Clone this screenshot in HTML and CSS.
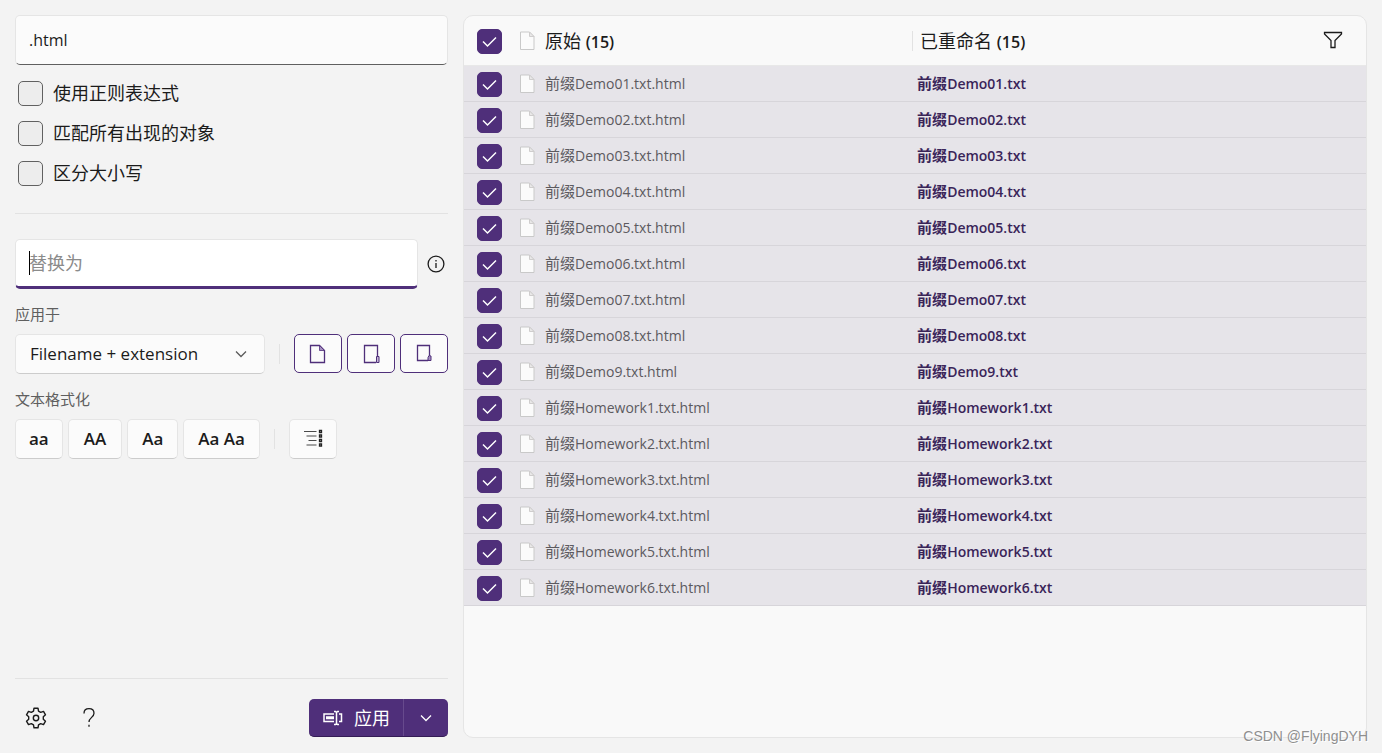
FILE: index.html
```html
<!DOCTYPE html>
<html lang="zh-CN">
<head>
<meta charset="utf-8">
<meta name="viewport" content="width=device-width, initial-scale=1">
<title>PowerRename</title>
<link rel="stylesheet" href="styles.css">
</head>
<body>
<svg class="sprite" aria-hidden="true">
  <symbol id="page" viewBox="0 0 15 20">
    <path d="M.500 1h9l4.500 4.500V18.500H.500z" fill="#fbfbfb" stroke="#c9c9c9"/>
    <path d="M9.500 1v4.500H14z" fill="#e9e8e8" stroke="#cfcdcd"/>
  </symbol>
  <symbol id="chevron" viewBox="0 0 12 8">
    <path d="M1 1.500l5 5 5-5" fill="none" stroke="currentColor" stroke-width="1.300"/>
  </symbol>
</svg>
<main class="app">
  <form class="sidebar">
    <input class="field" type="text" value=".html" aria-label="搜索">
    <div class="options">
      <label class="option"><input class="check" type="checkbox"><span>使用正则表达式</span></label>
      <label class="option"><input class="check" type="checkbox"><span>匹配所有出现的对象</span></label>
      <label class="option"><input class="check" type="checkbox"><span>区分大小写</span></label>
    </div>
    <hr class="rule">
    <div class="replace">
      <div class="replace-box">
        <input class="field field-active" type="text" placeholder="替换为" aria-label="替换为">
        <span class="caret"></span>
      </div>
      <button class="plain info" type="button" aria-label="信息">
        <svg width="18" height="18" viewBox="0 0 18 18" fill="none" stroke="currentColor"><circle cx="9" cy="9" r="7.900" stroke-width="1.300"/><path d="M9 8v5M9 5v1.500" stroke-width="1.300"/></svg>
      </button>
    </div>
    <label class="caption" for="scope">应用于</label>
    <div class="bar">
      <div class="select-box">
        <select class="select" id="scope"><option>Filename + extension</option></select>
        <svg class="select-arrow" width="12" height="8"><use href="#chevron"/></svg>
      </div>
      <span class="tick"></span>
      <div class="toggles">
        <button class="toggle" type="button" aria-label="包含文件">
          <svg width="20" height="22" viewBox="0 0 20 22" fill="none" stroke="currentColor"><path d="M2.500 2.500h9l5 5v12h-14z" stroke-width="1.300"/><path d="M11.500 2.500v5h5z" fill="#a58fc0" stroke-width=".800"/></svg>
        </button>
        <button class="toggle" type="button" aria-label="包含文件夹">
          <svg width="20" height="22" viewBox="0 0 20 22" fill="none" stroke="currentColor"><path d="M16.500 13.500v-11h-13v17h11.500" stroke-width="1.300"/><path d="M15.500 13.500h2.500v6h-2.500z" fill="#c5b7d6"/></svg>
        </button>
        <button class="toggle" type="button" aria-label="包含子文件夹">
          <svg width="20" height="22" viewBox="0 0 20 22" fill="none" stroke="currentColor"><path d="M15.500 12.500v-10h-12v15h10.500" stroke-width="1.300"/><path d="M15 12.500l2 .500v4.500h-3v-3z" fill="#a58fc0"/></svg>
        </button>
      </div>
    </div>
    <span class="caption">文本格式化</span>
    <div class="formats">
      <button class="format format-lower" type="button">aa</button>
      <button class="format format-upper" type="button">AA</button>
      <button class="format" type="button">Aa</button>
      <button class="format" type="button">Aa Aa</button>
      <span class="tick"></span>
      <button class="format format-icon" type="button" aria-label="枚举项">
        <svg width="20" height="20" viewBox="0 0 20 20" fill="none"><path d="M1 2.500h12.500M3.500 7h10M5.500 11.500h8M3.500 16h10" stroke="#4a4a4a" stroke-width="1.200"/><path d="M16.500 1.500h2v2h-2zM16.500 6h2v2h-2zM16.500 10.500h2v2h-2zM16.500 15h2v2h-2z" stroke="#222" stroke-width="1.300"/></svg>
      </button>
    </div>
    <footer class="footer">
      <button class="plain" type="button" aria-label="设置">
        <svg width="22" height="22" viewBox="0 0 22 22" fill="none" stroke="currentColor" stroke-width="1.400" stroke-linejoin="round"><path d="M9 1.200h4l.500 2.900 2.200 1.300 2.800-1 2 3.400-2.200 2v2.400l2.200 2-2 3.400-2.800-1-2.200 1.300-.500 2.900H9l-.500-2.900-2.200-1.300-2.800 1-2-3.400 2.200-2V9.800l-2.200-2 2-3.400 2.800 1 2.200-1.300z"/><circle cx="11" cy="11" r="2.700"/></svg>
      </button>
      <button class="plain" type="button" aria-label="帮助">
        <svg width="14" height="22" viewBox="0 0 14 22" fill="none" stroke="currentColor" stroke-width="1.300"><path d="M2 6.500C2 3.500 4 1.700 7 1.700s5 1.800 5 4.600c0 4-5 4.200-5 8.700"/><path d="M7 17.800v2"/></svg>
      </button>
      <div class="split">
        <button class="apply" type="button">
          <svg width="20" height="16" viewBox="0 0 20 16" fill="none" stroke="currentColor" stroke-width="1.500"><path d="M11 4H1v7.500h10M16 4h2.500v7.500H16M3 7h8M3 8.500h8"/><path d="M11 1.500h1.500l1 1 1-1H16M13.500 2.500v11M11 14.500h1.500l1-1 1 1H16"/></svg>
          <span>应用</span>
        </button>
        <button class="more" type="button" aria-label="更多"><svg width="12" height="8"><use href="#chevron"/></svg></button>
      </div>
    </footer>
  </form>
  <section class="panel">
    <table class="files">
      <colgroup><col class="col-check"><col class="col-icon"><col class="col-name"><col></colgroup>
      <thead>
        <tr>
          <th><input class="check" type="checkbox" checked aria-label="全选"></th>
          <th><svg width="15" height="20"><use href="#page"/></svg></th>
          <th>原始 <b>(15)</b></th>
          <th><div class="renamed-head"><span class="tick"></span><span>已重命名 <b>(15)</b></span>
            <button class="plain filter" type="button" aria-label="筛选"><svg width="20" height="20" viewBox="0 0 20 20" fill="none" stroke="currentColor" stroke-width="1.300"><path d="M1.500 1.500h17v1.500l-6.500 6.500v7H8v-7L1.500 3z"/></svg></button></div></th>
        </tr>
      </thead>
      <tbody>
        <tr><td><input class="check" type="checkbox" checked aria-label="Demo01"></td><td><svg width="15" height="20"><use href="#page"/></svg></td><td><span class="prefix">前缀</span>Demo01.txt.html</td><td><span class="prefix">前缀</span>Demo01.txt</td></tr>
        <tr><td><input class="check" type="checkbox" checked aria-label="Demo02"></td><td><svg width="15" height="20"><use href="#page"/></svg></td><td><span class="prefix">前缀</span>Demo02.txt.html</td><td><span class="prefix">前缀</span>Demo02.txt</td></tr>
        <tr><td><input class="check" type="checkbox" checked aria-label="Demo03"></td><td><svg width="15" height="20"><use href="#page"/></svg></td><td><span class="prefix">前缀</span>Demo03.txt.html</td><td><span class="prefix">前缀</span>Demo03.txt</td></tr>
        <tr><td><input class="check" type="checkbox" checked aria-label="Demo04"></td><td><svg width="15" height="20"><use href="#page"/></svg></td><td><span class="prefix">前缀</span>Demo04.txt.html</td><td><span class="prefix">前缀</span>Demo04.txt</td></tr>
        <tr><td><input class="check" type="checkbox" checked aria-label="Demo05"></td><td><svg width="15" height="20"><use href="#page"/></svg></td><td><span class="prefix">前缀</span>Demo05.txt.html</td><td><span class="prefix">前缀</span>Demo05.txt</td></tr>
        <tr><td><input class="check" type="checkbox" checked aria-label="Demo06"></td><td><svg width="15" height="20"><use href="#page"/></svg></td><td><span class="prefix">前缀</span>Demo06.txt.html</td><td><span class="prefix">前缀</span>Demo06.txt</td></tr>
        <tr><td><input class="check" type="checkbox" checked aria-label="Demo07"></td><td><svg width="15" height="20"><use href="#page"/></svg></td><td><span class="prefix">前缀</span>Demo07.txt.html</td><td><span class="prefix">前缀</span>Demo07.txt</td></tr>
        <tr><td><input class="check" type="checkbox" checked aria-label="Demo08"></td><td><svg width="15" height="20"><use href="#page"/></svg></td><td><span class="prefix">前缀</span>Demo08.txt.html</td><td><span class="prefix">前缀</span>Demo08.txt</td></tr>
        <tr><td><input class="check" type="checkbox" checked aria-label="Demo9"></td><td><svg width="15" height="20"><use href="#page"/></svg></td><td><span class="prefix">前缀</span>Demo9.txt.html</td><td><span class="prefix">前缀</span>Demo9.txt</td></tr>
        <tr><td><input class="check" type="checkbox" checked aria-label="Homework1"></td><td><svg width="15" height="20"><use href="#page"/></svg></td><td><span class="prefix">前缀</span>Homework1.txt.html</td><td><span class="prefix">前缀</span>Homework1.txt</td></tr>
        <tr><td><input class="check" type="checkbox" checked aria-label="Homework2"></td><td><svg width="15" height="20"><use href="#page"/></svg></td><td><span class="prefix">前缀</span>Homework2.txt.html</td><td><span class="prefix">前缀</span>Homework2.txt</td></tr>
        <tr><td><input class="check" type="checkbox" checked aria-label="Homework3"></td><td><svg width="15" height="20"><use href="#page"/></svg></td><td><span class="prefix">前缀</span>Homework3.txt.html</td><td><span class="prefix">前缀</span>Homework3.txt</td></tr>
        <tr><td><input class="check" type="checkbox" checked aria-label="Homework4"></td><td><svg width="15" height="20"><use href="#page"/></svg></td><td><span class="prefix">前缀</span>Homework4.txt.html</td><td><span class="prefix">前缀</span>Homework4.txt</td></tr>
        <tr><td><input class="check" type="checkbox" checked aria-label="Homework5"></td><td><svg width="15" height="20"><use href="#page"/></svg></td><td><span class="prefix">前缀</span>Homework5.txt.html</td><td><span class="prefix">前缀</span>Homework5.txt</td></tr>
        <tr><td><input class="check" type="checkbox" checked aria-label="Homework6"></td><td><svg width="15" height="20"><use href="#page"/></svg></td><td><span class="prefix">前缀</span>Homework6.txt.html</td><td><span class="prefix">前缀</span>Homework6.txt</td></tr>
      </tbody>
    </table>
  </section>
</main>
<div class="watermark">CSDN @FlyingDYH</div>
</body>
</html>
```
FILE: styles.css
```css
*, *::before, *::after { box-sizing: border-box; }

body {
  margin: 0;
  background: #f3f3f3;
  color: #1b1b1b;
  font: 18px/24px "Open Sans", "Noto Sans CJK SC", sans-serif;
}

button, input, select { font: inherit; color: inherit; margin: 0; }
svg { display: block; }
.sprite { position: absolute; width: 0; height: 0; }

.app {
  display: flex;
  gap: 15px;
  min-height: 100vh;
  padding: 15px;
}

/* Left column */
.sidebar {
  display: flex;
  flex-direction: column;
  flex: 0 0 433px;
}

.field {
  display: block;
  width: 100%;
  height: 50px;
  padding: 0 13px;
  border: 1px solid #e5e5e5;
  border-bottom-color: #5f5f5f;
  border-radius: 5px;
  background: #fbfbfb;
  font-size: 16px;
  outline: 0;
}
.field-active {
  border-bottom: 3px solid #4f2f7a;
  background: #fff;
  font-size: 18px;
}
.field::placeholder { color: #8b8b8b; opacity: 1; }

.options { padding: 8px 0 20px; }
.option {
  display: flex;
  align-items: center;
  gap: 10px;
  height: 40px;
  padding-left: 3px;
}

.check {
  display: block;
  appearance: none;
  width: 25px;
  height: 25px;
  border: 1px solid #616161;
  border-radius: 5px;
  background: #ededed;
}
.check:checked {
  border-color: #4f2f7a;
  background: #4f2f7a url("data:image/svg+xml,%3Csvg xmlns='http://www.w3.org/2000/svg' viewBox='0 0 25 25'%3E%3Cpath d='M6 12.500l4.500 4.500 8.500-8.500' fill='none' stroke='white' stroke-width='1.500'/%3E%3C/svg%3E") center / 25px 25px;
}

.rule {
  width: 100%;
  height: 1px;
  margin: 0 0 25px;
  border: 0;
  background: #e2e2e2;
}

.replace { display: flex; align-items: center; gap: 9px; }
.replace-box { position: relative; flex: 1; }
.caret {
  position: absolute;
  left: 14px;
  top: 12px;
  width: 1px;
  height: 24px;
  background: #000;
}

.plain {
  display: grid;
  place-items: center;
  padding: 0;
  border: 0;
  background: none;
}
.info { width: 18px; margin-right: 3px; }

.caption {
  padding: 13px 0 8px;
  color: #5f5f5f;
  font-size: 15px;
}

.bar { display: flex; align-items: center; }
.select-box { position: relative; flex: 1; }
.select {
  display: block;
  appearance: none;
  width: 100%;
  height: 40px;
  padding: 0 40px 0 14px;
  border: 1px solid #e5e5e5;
  border-bottom-color: #cccccc;
  border-radius: 5px;
  background: #fbfbfb;
  font-size: 17px;
}
.select-arrow {
  position: absolute;
  right: 18px;
  top: 16px;
  color: #5a5a5a;
  pointer-events: none;
}
.tick {
  flex: none;
  width: 1px;
  height: 20px;
  margin: 0 14px;
  background: #e2e2e2;
}
.toggles { display: flex; align-self: flex-start; gap: 5px; }
.toggle {
  display: grid;
  place-items: center;
  width: 48px;
  height: 39px;
  padding: 0;
  border: 1px solid #4f2f7a;
  border-radius: 5px;
  background: #fbfbfb;
  color: #4f2f7a;
}

.formats { display: flex; align-items: center; gap: 5px; }
.formats .tick { margin: 0 9px; }
.format {
  height: 40px;
  padding: 0 14px;
  border: 1px solid #e5e5e5;
  border-bottom-color: #cccccc;
  border-radius: 5px;
  background: #fbfbfb;
  font-size: 17px;
  font-weight: 600;
}
.format-lower, .format-icon { padding: 0 13px; }
.format-upper { padding: 0 15px; }

.footer {
  display: flex;
  align-items: center;
  margin-top: auto;
  padding: 20px 0 1px 10px;
  border-top: 1px solid #e2e2e2;
  gap: 35px;
}
.split {
  display: flex;
  height: 38px;
  margin-left: auto;
  border-bottom: 1px solid #341c55;
  border-radius: 5px;
  background: #4f2f7a;
  color: #fff;
}
.apply, .more {
  display: flex;
  align-items: center;
  justify-content: center;
  border: 0;
  background: none;
}
.apply { gap: 11px; padding: 0 13px 0 14px; }
.more { width: 45px; padding: 0; border-left: 1px solid #674a8d; }

/* File list */
.panel {
  flex: 1;
  min-width: 0;
  overflow: hidden;
  border: 1px solid #e5e5e5;
  border-radius: 10px;
  background: #f9f9f9;
}
.files {
  width: 100%;
  table-layout: fixed;
  border-collapse: separate;
  border-spacing: 0;
}
.col-check { width: 56px; }
.col-icon { width: 25px; }
.col-name { width: 40.7%; }

.files th, .files td { padding: 0; text-align: left; vertical-align: middle; }
.files th { height: 50px; padding-top: 1px; border-bottom: 1px solid #e8e8e8; font-weight: 400; }
.files th b { font-size: 16px; font-weight: 600; }
.files td {
  height: 36px;
  border-bottom: 1px solid #d7d5da;
  background: #e6e4e9;
  color: #5c5a5f;
  font-size: 14px;
}
.files th:first-child, .files td:first-child { padding: 2px 0 0 13px; }
.files td:last-child { padding-left: 5px; color: #3a2459; font-weight: 600; }
.prefix { font-size: 15px; }

.renamed-head { display: flex; align-items: center; }
.renamed-head .tick { margin: 0 7px 0 0; }
.filter { margin: 0 23px 0 auto; }

.watermark {
  position: absolute;
  right: 14px;
  bottom: 6px;
  color: #8f8f8f;
  font: 14px/22px "Liberation Sans", sans-serif;
  text-shadow: 1px 1px 0 #fff;
}
```
